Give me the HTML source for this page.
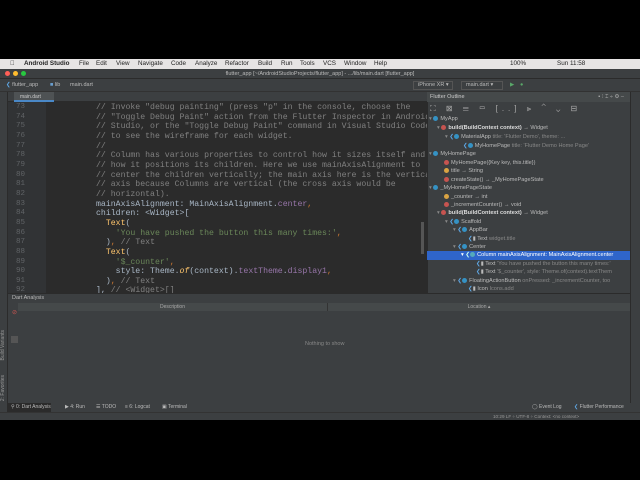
<!DOCTYPE html>
<html><head><style>
*{margin:0;padding:0;box-sizing:border-box}
body{width:640px;height:480px;background:#000;position:relative;overflow:hidden;font-family:"Liberation Sans",sans-serif}
.a{position:absolute}
.mono{font-family:"Liberation Mono",monospace;font-size:8.2px;white-space:pre}
.c{color:#808080}.k{color:#cc7832}.s{color:#6a8759}.p{color:#9876aa}.t{color:#a9b7c6}.y{color:#ffc66d}
.row{position:absolute;font-size:5.6px;color:#bbb;white-space:nowrap;height:8.4px;line-height:8.4px}
.row b{color:#ddd;font-weight:bold}
.row i{font-style:normal;color:#888}
.dot{display:inline-block;width:5px;height:5px;border-radius:50%;vertical-align:-1px;margin-right:2px}
</style></head><body>
<!-- menu bar -->
<div class="a" style="left:0;top:59px;width:640px;height:10px;background:#e6e4e4;font-size:6.3px;line-height:10px;color:#222;white-space:nowrap">
<span class="a" style="left:10px">&#63743;</span>
<span class="a" style="left:24px;font-weight:bold">Android Studio</span>
<span class="a" style="left:79px">File</span><span class="a" style="left:96px">Edit</span><span class="a" style="left:116px">View</span><span class="a" style="left:138px">Navigate</span><span class="a" style="left:171px">Code</span><span class="a" style="left:195px">Analyze</span><span class="a" style="left:225px">Refactor</span><span class="a" style="left:258px">Build</span><span class="a" style="left:281px">Run</span><span class="a" style="left:300px">Tools</span><span class="a" style="left:323px">VCS</span><span class="a" style="left:344px">Window</span><span class="a" style="left:374px">Help</span>
<span class="a" style="left:510px">100%</span><span class="a" style="left:557px">Sun 11:58</span>
</div>
<!-- title bar -->
<div class="a" style="left:0;top:69px;width:640px;height:10px;background:#3c3f41;border-bottom:1px solid #2b2b2b;font-size:5.5px;line-height:10px;color:#bbb;text-align:center">
<span class="a" style="left:5px;top:2px;width:5px;height:5px;border-radius:50%;background:#ff5f57"></span>
<span class="a" style="left:13px;top:2px;width:5px;height:5px;border-radius:50%;background:#febc2e"></span>
<span class="a" style="left:21px;top:2px;width:5px;height:5px;border-radius:50%;background:#28c840"></span>
flutter_app [~/AndroidStudioProjects/flutter_app] - .../lib/main.dart [flutter_app]</div>
<!-- nav bar -->
<div class="a" style="left:0;top:79px;width:640px;height:13px;background:#3c3f41;font-size:5.5px;line-height:13px;color:#bbb;border-bottom:1px solid #323232">
<span class="a" style="left:6px"><span style="color:#5fa8e6">&#10094;</span> flutter_app</span><span class="a" style="left:50px"><span style="color:#6a9fd0">&#9632;</span> lib</span><span class="a" style="left:70px">main.dart</span>
<span class="a" style="left:413px;top:2px;width:40px;height:9px;border:1px solid #555;line-height:7px;padding-left:4px">iPhone XR ▾</span>
<span class="a" style="left:461px;top:2px;width:42px;height:9px;border:1px solid #555;line-height:7px;padding-left:4px">main.dart ▾</span>
<span class="a" style="left:510px;color:#59a869">▶</span><span class="a" style="left:520px;color:#59a869">●</span>
</div>
<!-- left stripe -->
<div class="a" style="left:0;top:92px;width:8px;height:320px;background:#3c3f41;border-right:1px solid #2b2b2b"></div>
<!-- tab bar -->
<div class="a" style="left:8px;top:92px;width:419px;height:10px;background:#3c3f41;border-bottom:1px solid #2b2b2b">
<div class="a" style="left:6px;top:0;width:40px;height:10px;background:#4e5254;font-size:5px;line-height:10px;color:#ccc;padding-left:6px;border-bottom:2px solid #4a88c7">main.dart</div></div>
<!-- editor -->
<div class="a" style="left:8px;top:102px;width:419px;height:191px;background:#2b2b2b;overflow:hidden">
<div class="a" style="left:0;top:0;width:38px;height:191px;background:#313335"></div>
<div class="a" style="left:413px;top:120px;width:3px;height:32px;background:#555"></div>
<div class="a mono t" style="left:88px;top:1px;line-height:9.65px"><span class="c">// Invoke "debug painting" (press "p" in the console, choose the</span>
<span class="c">// "Toggle Debug Paint" action from the Flutter Inspector in Android</span>
<span class="c">// Studio, or the "Toggle Debug Paint" command in Visual Studio Code)</span>
<span class="c">// to see the wireframe for each widget.</span>
<span class="c">//</span>
<span class="c">// Column has various properties to control how it sizes itself and</span>
<span class="c">// how it positions its children. Here we use mainAxisAlignment to</span>
<span class="c">// center the children vertically; the main axis here is the vertical</span>
<span class="c">// axis because Columns are vertical (the cross axis would be</span>
<span class="c">// horizontal).</span>
mainAxisAlignment: MainAxisAlignment.<span class="p">center</span><span class="k">,</span>
children: &lt;Widget&gt;[
  <span class="y">Text</span>(
    <span class="s">'You have pushed the button this many times:'</span><span class="k">,</span>
  )<span class="k">,</span> <span class="c">// Text</span>
  <span class="y">Text</span>(
    <span class="s">'$_counter'</span><span class="k">,</span>
    style: Theme.<i class="y">of</i>(context).<span class="p">textTheme</span>.<span class="p">display1</span><span class="k">,</span>
  )<span class="k">,</span> <span class="c">// Text</span>
], <span class="c">// &lt;Widget&gt;[]</span></div>
<div class="a" style="left:8px;top:1px;font-family:'Liberation Mono',monospace;font-size:7.5px;line-height:9.65px;color:#606366;white-space:pre">73
74
75
76
77
78
79
80
81
82
83
84
85
86
87
88
89
90
91
92</div>
</div>
<!-- outline panel -->
<div class="a" style="left:427px;top:92px;width:203px;height:201px;background:#3c3f41;border-left:1px solid #2b2b2b"></div>
<div class="a" style="left:427px;top:92px;width:203px;height:10px;background:#45494a;font-size:5.5px;line-height:10px;color:#ccc;padding-left:3px">Flutter Outline<span style="float:right;margin-right:6px;color:#aaa">▪ ⁝ ⌶ ÷ ⚙ –</span></div>
<div class="a" style="left:430px;top:104px;font-size:8px;color:#aaa;letter-spacing:4px">⛶ ⊠ ☰ ▭ [..] ⫸ ⌃ ⌄ ⊟</div>
<div class="a" style="left:630px;top:92px;width:10px;height:320px;background:#3c3f41;border-left:1px solid #2b2b2b"></div>
<div class="row" style="left:429px;top:115px"><i>▾</i> <span class="dot" style="background:#3592c4"></span>MyApp</div>
<div class="row" style="left:437px;top:124px"><i>▾</i> <span class="dot" style="background:#c75450"></span><b>build(BuildContext context)</b> → Widget</div>
<div class="row" style="left:445px;top:133px"><i>▾</i> <span style="color:#5fa8e6">❮</span><span class="dot" style="background:#3592c4"></span>MaterialApp <i>title: 'Flutter Demo', theme: ...</i></div>
<div class="row" style="left:463px;top:142px"><span style="color:#5fa8e6">❮</span><span class="dot" style="background:#3592c4"></span>MyHomePage <i>title: 'Flutter Demo Home Page'</i></div>
<div class="row" style="left:429px;top:150px"><i>▾</i> <span class="dot" style="background:#3592c4"></span>MyHomePage</div>
<div class="row" style="left:444px;top:159px"><span class="dot" style="background:#c75450"></span>MyHomePage({Key key, this.title})</div>
<div class="row" style="left:444px;top:167px"><span class="dot" style="background:#d9a343"></span>title → String</div>
<div class="row" style="left:444px;top:176px"><span class="dot" style="background:#c75450"></span>createState() → _MyHomePageState</div>
<div class="row" style="left:429px;top:184px"><i>▾</i> <span class="dot" style="background:#3592c4"></span>_MyHomePageState</div>
<div class="row" style="left:444px;top:193px"><span class="dot" style="background:#d9a343"></span>_counter → int</div>
<div class="row" style="left:444px;top:201px"><span class="dot" style="background:#c75450"></span>_incrementCounter() → void</div>
<div class="row" style="left:437px;top:209px"><i>▾</i> <span class="dot" style="background:#c75450"></span><b>build(BuildContext context)</b> → Widget</div>
<div class="row" style="left:445px;top:218px"><i>▾</i> <span style="color:#5fa8e6">❮</span><span class="dot" style="background:#3592c4"></span>Scaffold</div>
<div class="row" style="left:453px;top:226px"><i>▾</i> <span style="color:#5fa8e6">❮</span><span class="dot" style="background:#3592c4"></span>AppBar</div>
<div class="row" style="left:468px;top:235px"><span style="color:#5fa8e6">❮</span>▮ Text <i>widget.title</i></div>
<div class="row" style="left:453px;top:243px"><i>▾</i> <span style="color:#5fa8e6">❮</span><span class="dot" style="background:#3592c4"></span>Center</div>
<div class="a" style="left:427px;top:251px;width:203px;height:9px;background:#2f65ca"></div>
<div class="row" style="left:461px;top:251px;color:#fff"><i style="color:#fff">▾</i> <span style="color:#cfe">❮</span><span class="dot" style="background:#5ab"></span>Column mainAxisAlignment: MainAxisAlignment.center</div>
<div class="row" style="left:476px;top:260px"><span style="color:#5fa8e6">❮</span>▮ Text <i>'You have pushed the button this many times:'</i></div>
<div class="row" style="left:476px;top:268px"><span style="color:#5fa8e6">❮</span>▮ Text <i>'$_counter', style: Theme.of(context).textThem</i></div>
<div class="row" style="left:453px;top:277px"><i>▾</i> <span style="color:#5fa8e6">❮</span><span class="dot" style="background:#3592c4"></span>FloatingActionButton <i>onPressed: _incrementCounter, too</i></div>
<div class="row" style="left:468px;top:285px"><span style="color:#5fa8e6">❮</span>▮ Icon <i>Icons.add</i></div>
<!-- dart analysis -->
<div class="a" style="left:8px;top:293px;width:622px;height:110px;background:#3c3f41;border-top:1px solid #2b2b2b"></div>
<div class="a" style="left:12px;top:294px;font-size:5.5px;line-height:9px;color:#bbb">Dart Analysis</div>
<div class="a" style="left:18px;top:303px;width:310px;height:8px;background:#45494a;border-right:1px solid #333;font-size:5px;line-height:8px;color:#aaa;text-align:center">Description</div>
<div class="a" style="left:328px;top:303px;width:302px;height:8px;background:#45494a;font-size:5px;line-height:8px;color:#aaa;text-align:center">Location ▴</div>
<div class="a" style="left:12px;top:309px;font-size:6px;color:#c75450">⊘</div>
<div class="a" style="left:11px;top:336px;width:7px;height:7px;background:#555"></div>
<div class="a" style="left:0;top:330px;width:8px;font-size:5px;color:#999;writing-mode:vertical-rl;transform:rotate(180deg)">Build Variants</div>
<div class="a" style="left:0;top:375px;width:8px;font-size:5px;color:#999;writing-mode:vertical-rl;transform:rotate(180deg)">2: Favorites</div>
<div class="a" style="left:305px;top:341px;font-size:5.5px;color:#888">Nothing to show</div>
<!-- bottom tool strip -->
<div class="a" style="left:0;top:403px;width:640px;height:9px;background:#3c3f41;font-size:5px;line-height:9px;color:#bbb;white-space:nowrap">
<span class="a" style="left:7px;width:44px;background:#2b2b2b;padding-left:4px">⚲ 0: Dart Analysis</span>
<span class="a" style="left:65px">▶ 4: Run</span><span class="a" style="left:96px">☰ TODO</span><span class="a" style="left:125px">≡ 6: Logcat</span><span class="a" style="left:162px">▣ Terminal</span>
<span class="a" style="left:532px">◯ Event Log</span><span class="a" style="left:574px"><span style="color:#5fa8e6">❮</span> Flutter Performance</span></div>
<div class="a" style="left:0;top:412px;width:640px;height:8px;background:#3c3f41;border-top:1px solid #333;font-size:4.6px;line-height:8px;color:#999;white-space:nowrap"><span class="a" style="left:493px">10:29 LF ÷ UTF-8 ÷ Context: &lt;no context&gt;</span></div>
</body></html>
